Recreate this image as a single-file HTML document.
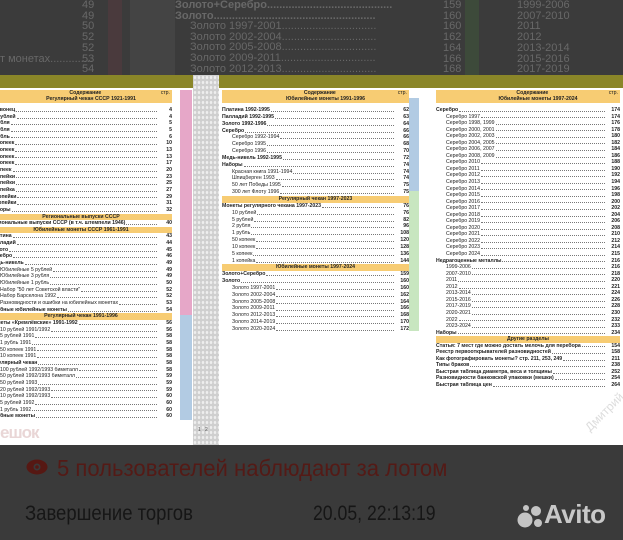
<!DOCTYPE html>
<html><head><meta charset="utf-8"><style>
*{margin:0;padding:0;box-sizing:border-box}
body{width:623px;height:540px;overflow:hidden;background:#3a3a3a;font-family:"Liberation Sans",sans-serif;position:relative}
.abs{position:absolute}
.col{position:absolute;font-size:5.2px;color:#222}
.r{display:flex;white-space:nowrap;overflow:hidden}
.r span{flex:0 0 auto}
.r i{flex:1 1 auto;border-bottom:0.6px dotted #777;margin:0 1px 1.8px}
.r b{flex:0 0 14px;text-align:right}
.r.s{padding-left:10px}
.r.h span{font-weight:bold}
.bar{background:#f7cc73;text-align:center;font-weight:bold;white-space:nowrap}
.top{position:absolute;color:#686868;font-size:11px;white-space:nowrap}
</style></head><body>
<!-- top dark region -->
<div class="abs" style="left:0;top:0;width:623px;height:75px;background:#3b3b3b"></div>
<div class="abs" style="left:108px;top:0;width:14px;height:75px;background:#4a3a3d"></div>
<div class="abs" style="left:130px;top:0;width:45px;height:75px;background:#444"></div>
<div class="abs" style="left:465px;top:0;width:14px;height:75px;background:#3d4a3a"></div>
<div class="top" style="left:82px;top:0;line-height:10.7px">49<br>49<br>50<br>52<br>52<br>53<br>54</div>
<div class="top" style="left:0;top:53px">т монетах..............</div>
<div class="top" style="left:175px;top:0;line-height:10.7px;font-weight:bold">Золото+Серебро.........................................<br>Золото.....................................................</div>
<div class="top" style="left:190px;top:21px;line-height:10.7px">Золото 1997-2001...............................<br>Золото 2002-2004...............................<br>Золото 2005-2008...............................<br>Золото 2009-2011...............................<br>Золото 2012-2013...............................</div>
<div class="top" style="left:443px;top:0;line-height:10.7px">159<br>160<br>160<br>162<br>164<br>166<br>168</div>
<div class="top" style="left:517px;top:0;line-height:10.7px">1999-2006<br>2007-2010<br>2011<br>2012<br>2013-2014<br>2015-2016<br>2017-2019</div>
<!-- olive band -->
<div class="abs" style="left:0;top:75px;width:623px;height:13px;background:#8a8628"></div>
<!-- white page -->
<div class="abs" style="left:0;top:88px;width:623px;height:357px;background:#fff"></div>
<div class="abs" style="left:193px;top:75px;width:26px;height:370px;background:#cfcfcf;background-image:radial-gradient(#eee 1px,transparent 1.5px);background-size:4px 5px"></div>
<div class="abs" style="left:198px;top:427px;font-size:5px;color:#555">1 &nbsp; 2</div>
<!-- sidebars -->
<div class="abs" style="left:180px;top:90px;width:12px;height:225px;background:#e6a7c8"></div>
<div class="abs" style="left:180px;top:315px;width:12px;height:105px;background:#b2cbe3"></div>
<div class="abs" style="left:409px;top:98px;width:10px;height:93px;background:#b2cbe3"></div>
<div class="abs" style="left:409px;top:191px;width:10px;height:140px;background:#c8e6c0"></div>

<!-- LEFT column -->
<div class="col" style="left:-10px;top:90px;width:182px;line-height:6.65px">
<div class="bar" style="height:13px;line-height:6.3px;padding-left:20px">Содержание<span style="float:right;font-weight:normal;margin-right:2px">стр.</span><br>Регулярный чекан СССР 1921-1991</div>
<div style="height:4px"></div>
<div class="r h"><span>Червонец</span><i></i><b>4</b></div>
<div class="r h"><span>25 рублей</span><i></i><b>4</b></div>
<div class="r h"><span>3 рубля</span><i></i><b>5</b></div>
<div class="r h"><span>2 рубля</span><i></i><b>5</b></div>
<div class="r h"><span>1 рубль</span><i></i><b>6</b></div>
<div class="r h"><span>50 копеек</span><i></i><b>10</b></div>
<div class="r h"><span>20 копеек</span><i></i><b>13</b></div>
<div class="r h"><span>15 копеек</span><i></i><b>13</b></div>
<div class="r h"><span>10 копеек</span><i></i><b>17</b></div>
<div class="r h"><span>5 копеек</span><i></i><b>20</b></div>
<div class="r h"><span>3 копейки</span><i></i><b>23</b></div>
<div class="r h"><span>2 копейки</span><i></i><b>25</b></div>
<div class="r h"><span>1 копейка</span><i></i><b>27</b></div>
<div class="r h"><span>½ копейки</span><i></i><b>29</b></div>
<div class="r h"><span>¼ копейки</span><i></i><b>31</b></div>
<div class="r h"><span>Наборы</span><i></i><b>32</b></div>
<div class="bar">Региональные выпуски СССР</div>
<div class="r h"><span>Региональные выпуски СССР (в т.ч. штемпели 1946)</span><i></i><b>40</b></div>
<div class="bar">Юбилейные монеты СССР 1961-1991</div>
<div class="r h"><span>Платина</span><i></i><b>43</b></div>
<div class="r h"><span>Палладий</span><i></i><b>44</b></div>
<div class="r h"><span>Золото</span><i></i><b>45</b></div>
<div class="r h"><span>Серебро</span><i></i><b>46</b></div>
<div class="r h"><span>Медь-никель</span><i></i><b>49</b></div>
<div class="r s"><span>Юбилейные 5 рублей</span><i></i><b>49</b></div>
<div class="r s"><span>Юбилейные 3 рубля</span><i></i><b>49</b></div>
<div class="r s"><span>Юбилейные 1 рубль</span><i></i><b>50</b></div>
<div class="r s"><span>Набор "50 лет Советской власти"</span><i></i><b>52</b></div>
<div class="r s"><span>Набор Барселона 1992</span><i></i><b>52</b></div>
<div class="r s"><span>Разновидности и ошибки на юбилейных монетах</span><i></i><b>53</b></div>
<div class="r h"><span>Пробные юбилейные монеты</span><i></i><b>54</b></div>
<div class="bar">Регулярный чекан 1991-1996</div>
<div class="r h"><span>Монеты «Кремлёвские» 1991-1992</span><i></i><b>56</b></div>
<div class="r s"><span>10 рублей 1991/1992</span><i></i><b>56</b></div>
<div class="r s"><span>5 рублей 1991</span><i></i><b>58</b></div>
<div class="r s"><span>1 рубль 1991</span><i></i><b>58</b></div>
<div class="r s"><span>50 копеек 1991</span><i></i><b>58</b></div>
<div class="r s"><span>10 копеек 1991</span><i></i><b>58</b></div>
<div class="r h"><span>Регулярный чекан</span><i></i><b>58</b></div>
<div class="r s"><span>100 рублей 1992/1993 биметалл</span><i></i><b>58</b></div>
<div class="r s"><span>50 рублей 1992/1993 биметалл</span><i></i><b>59</b></div>
<div class="r s"><span>50 рублей 1993</span><i></i><b>59</b></div>
<div class="r s"><span>20 рублей 1992/1993</span><i></i><b>59</b></div>
<div class="r s"><span>10 рублей 1992/1993</span><i></i><b>60</b></div>
<div class="r s"><span>5 рублей 1992</span><i></i><b>60</b></div>
<div class="r s"><span>1 рубль 1992</span><i></i><b>60</b></div>
<div class="r h"><span>Пробные монеты</span><i></i><b>60</b></div>
</div>
<div class="abs" style="left:0;top:423px;font-size:17px;font-weight:bold;color:#e9d6d6;letter-spacing:-1px">ешок</div>

<!-- MIDDLE column -->
<div class="col" style="left:222px;top:90px;width:187px;line-height:6.85px">
<div class="bar" style="height:13px;line-height:6.3px;padding-left:20px">Содержание<span style="float:right;font-weight:normal;margin-right:2px">стр.</span><br>Юбилейные монеты 1991-1996</div>
<div style="height:4px"></div>
<div class="r h"><span>Платина 1992-1995</span><i></i><b>62</b></div>
<div class="r h"><span>Палладий 1992-1995</span><i></i><b>63</b></div>
<div class="r h"><span>Золото 1992-1996</span><i></i><b>64</b></div>
<div class="r h"><span>Серебро</span><i></i><b>66</b></div>
<div class="r s"><span>Серебро 1992-1994</span><i></i><b>66</b></div>
<div class="r s"><span>Серебро 1995</span><i></i><b>68</b></div>
<div class="r s"><span>Серебро 1996</span><i></i><b>70</b></div>
<div class="r h"><span>Медь-никель 1992-1995</span><i></i><b>72</b></div>
<div class="r h"><span>Наборы</span><i></i><b>74</b></div>
<div class="r s"><span>Красная книга 1991-1994</span><i></i><b>74</b></div>
<div class="r s"><span>Шпицберген 1993</span><i></i><b>74</b></div>
<div class="r s"><span>50 лет Победы 1995</span><i></i><b>75</b></div>
<div class="r s"><span>300 лет Флоту 1996</span><i></i><b>75</b></div>
<div class="bar">Регулярный чекан 1997-2023</div>
<div class="r h"><span>Монеты регулярного чекана 1997-2023</span><i></i><b>76</b></div>
<div class="r s"><span>10 рублей</span><i></i><b>76</b></div>
<div class="r s"><span>5 рублей</span><i></i><b>82</b></div>
<div class="r s"><span>2 рубля</span><i></i><b>96</b></div>
<div class="r s"><span>1 рубль</span><i></i><b>108</b></div>
<div class="r s"><span>50 копеек</span><i></i><b>120</b></div>
<div class="r s"><span>10 копеек</span><i></i><b>128</b></div>
<div class="r s"><span>5 копеек</span><i></i><b>136</b></div>
<div class="r s"><span>1 копейка</span><i></i><b>144</b></div>
<div class="bar">Юбилейные монеты 1997-2024</div>
<div class="r h"><span>Золото+Серебро</span><i></i><b>159</b></div>
<div class="r h"><span>Золото</span><i></i><b>160</b></div>
<div class="r s"><span>Золото 1997-2001</span><i></i><b>160</b></div>
<div class="r s"><span>Золото 2002-2004</span><i></i><b>162</b></div>
<div class="r s"><span>Золото 2005-2008</span><i></i><b>164</b></div>
<div class="r s"><span>Золото 2009-2011</span><i></i><b>166</b></div>
<div class="r s"><span>Золото 2012-2013</span><i></i><b>168</b></div>
<div class="r s"><span>Золото 2014-2019</span><i></i><b>170</b></div>
<div class="r s"><span>Золото 2020-2024</span><i></i><b>172</b></div>
</div>

<!-- RIGHT column -->
<div class="col" style="left:436px;top:90px;width:184px;line-height:6.55px">
<div class="bar" style="height:13px;line-height:6.3px;padding-left:20px">Содержание<span style="float:right;font-weight:normal;margin-right:2px">стр.</span><br>Юбилейные монеты 1997-2024</div>
<div style="height:4px"></div>
<div class="r h"><span>Серебро</span><i></i><b>174</b></div>
<div class="r s"><span>Серебро 1997</span><i></i><b>174</b></div>
<div class="r s"><span>Серебро 1998, 1999</span><i></i><b>176</b></div>
<div class="r s"><span>Серебро 2000, 2001</span><i></i><b>178</b></div>
<div class="r s"><span>Серебро 2002, 2003</span><i></i><b>180</b></div>
<div class="r s"><span>Серебро 2004, 2005</span><i></i><b>182</b></div>
<div class="r s"><span>Серебро 2006, 2007</span><i></i><b>184</b></div>
<div class="r s"><span>Серебро 2008, 2009</span><i></i><b>186</b></div>
<div class="r s"><span>Серебро 2010</span><i></i><b>188</b></div>
<div class="r s"><span>Серебро 2011</span><i></i><b>190</b></div>
<div class="r s"><span>Серебро 2012</span><i></i><b>192</b></div>
<div class="r s"><span>Серебро 2013</span><i></i><b>194</b></div>
<div class="r s"><span>Серебро 2014</span><i></i><b>196</b></div>
<div class="r s"><span>Серебро 2015</span><i></i><b>198</b></div>
<div class="r s"><span>Серебро 2016</span><i></i><b>200</b></div>
<div class="r s"><span>Серебро 2017</span><i></i><b>202</b></div>
<div class="r s"><span>Серебро 2018</span><i></i><b>204</b></div>
<div class="r s"><span>Серебро 2019</span><i></i><b>206</b></div>
<div class="r s"><span>Серебро 2020</span><i></i><b>208</b></div>
<div class="r s"><span>Серебро 2021</span><i></i><b>210</b></div>
<div class="r s"><span>Серебро 2022</span><i></i><b>212</b></div>
<div class="r s"><span>Серебро 2023</span><i></i><b>214</b></div>
<div class="r s"><span>Серебро 2024</span><i></i><b>215</b></div>
<div class="r h"><span>Недрагоценные металлы</span><i></i><b>216</b></div>
<div class="r s"><span>1999-2006</span><i></i><b>216</b></div>
<div class="r s"><span>2007-2010</span><i></i><b>218</b></div>
<div class="r s"><span>2011</span><i></i><b>220</b></div>
<div class="r s"><span>2012</span><i></i><b>221</b></div>
<div class="r s"><span>2013-2014</span><i></i><b>224</b></div>
<div class="r s"><span>2015-2016</span><i></i><b>226</b></div>
<div class="r s"><span>2017-2019</span><i></i><b>228</b></div>
<div class="r s"><span>2020-2021</span><i></i><b>230</b></div>
<div class="r s"><span>2022</span><i></i><b>232</b></div>
<div class="r s"><span>2023-2024</span><i></i><b>233</b></div>
<div class="r h"><span>Наборы</span><i></i><b>234</b></div>
<div class="bar">Другие разделы</div>
<div class="r h"><span>Статья: 7 мест где можно достать мелочь для перебора</span><i></i><b>154</b></div>
<div class="r h"><span>Реестр первооткрывателей разновидностей</span><i></i><b>158</b></div>
<div class="r h"><span>Как фотографировать монеты? стр. 211, 253, 249</span><i></i><b>211</b></div>
<div class="r h"><span>Типы браков</span><i></i><b>238</b></div>
<div class="r h"><span>Быстрая таблица диаметра, веса и толщины</span><i></i><b>252</b></div>
<div class="r h"><span>Разновидности банковской упаковки (мешки)</span><i></i><b>254</b></div>
<div class="r h"><span>Быстрая таблица цен</span><i></i><b>264</b></div>
</div>
<div class="abs" style="left:580px;top:405px;font-size:12px;color:#ddd;transform:rotate(-45deg)">Дмитрий</div>

<!-- bottom -->
<div class="abs" style="left:0;top:445px;width:623px;height:95px;background:#3a3a3a"></div>
<svg class="abs" style="left:26px;top:459px" width="22" height="16" viewBox="0 0 22 16"><ellipse cx="11" cy="8" rx="10.5" ry="7.5" fill="#561813"/><circle cx="11" cy="8" r="3.5" fill="#3a3a3a"/><circle cx="11" cy="8" r="1.8" fill="#561813"/></svg>
<div class="abs" style="left:57px;top:455px;font-size:23px;color:#541a16;white-space:nowrap;transform-origin:0 0;transform:scaleX(0.96)">5 пользователей наблюдают за лотом</div>
<div class="abs" style="left:25px;top:502px;font-size:21px;color:#161616;white-space:nowrap;transform-origin:0 0;transform:scaleX(0.88)">Завершение торгов</div>
<div class="abs" style="left:313px;top:502px;font-size:21px;color:#161616;white-space:nowrap;transform-origin:0 0;transform:scaleX(0.84)">20.05, 22:13:19</div>
<svg class="abs" style="left:517px;top:503px" width="28" height="26" viewBox="0 0 28 26"><circle cx="8" cy="17" r="7.5" fill="#c4c4c4"/><circle cx="19" cy="8" r="5" fill="#c4c4c4"/><circle cx="21" cy="20" r="4" fill="#c4c4c4"/><circle cx="9" cy="5" r="3" fill="#c4c4c4"/></svg>
<div class="abs" style="left:544px;top:499px;font-size:26px;font-weight:bold;color:#c8c8c8;letter-spacing:-0.5px">Avito</div>
</body></html>
